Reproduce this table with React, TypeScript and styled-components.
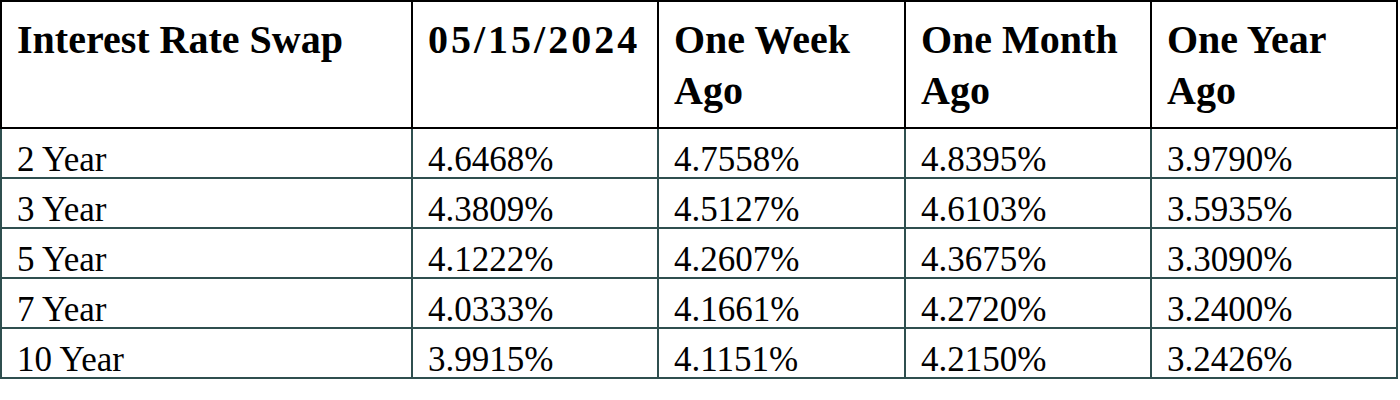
import React from "react";
import styled, { createGlobalStyle } from "styled-components";

const GlobalStyle = createGlobalStyle`
  body {
    margin: 0;
    background: #fff;
    font-family: "Liberation Serif", "Times New Roman", serif;
    color: #000;
  }
`;

const Table = styled.table`
  width: 1398px;
  table-layout: fixed;
  border-collapse: collapse;
  font-family: "Liberation Serif", "Times New Roman", serif;
`;

const Col = styled.col<{ $width: number }>`
  width: ${(p) => p.$width}px;
`;

const HeadCell = styled.th<{ $spread?: boolean }>`
  border: 2px solid #000;
  padding: 12px 15px 11px;
  font-size: 40px;
  line-height: 51px;
  font-weight: 700;
  text-align: left;
  vertical-align: top;
  letter-spacing: ${(p) => (p.$spread ? "3px" : "0")};
`;

const Cell = styled.td`
  border: 2px solid #2f4f4f;
  padding: 13px 15px 0;
  font-size: 35px;
  line-height: 35px;
  text-align: left;
  vertical-align: bottom;
  white-space: nowrap;
`;

const columns = [
  "Interest Rate Swap",
  "05/15/2024",
  "One Week Ago",
  "One Month Ago",
  "One Year Ago",
];

const widths = [411, 246, 247, 246, 246];

const rows = [
  ["2 Year", "4.6468%", "4.7558%", "4.8395%", "3.9790%"],
  ["3 Year", "4.3809%", "4.5127%", "4.6103%", "3.5935%"],
  ["5 Year", "4.1222%", "4.2607%", "4.3675%", "3.3090%"],
  ["7 Year", "4.0333%", "4.1661%", "4.2720%", "3.2400%"],
  ["10 Year", "3.9915%", "4.1151%", "4.2150%", "3.2426%"],
];

export default function App() {
  return (
    <>
      <GlobalStyle />
      <Table>
        <colgroup>
          {widths.map((w, i) => (
            <Col key={i} $width={w} />
          ))}
        </colgroup>
        <thead>
          <tr>
            {columns.map((c, i) => (
              <HeadCell key={c} $spread={i === 1}>
                {c}
              </HeadCell>
            ))}
          </tr>
        </thead>
        <tbody>
          {rows.map((r) => (
            <tr key={r[0]}>
              {r.map((v, i) => (
                <Cell key={i}>{v}</Cell>
              ))}
            </tr>
          ))}
        </tbody>
      </Table>
    </>
  );
}
